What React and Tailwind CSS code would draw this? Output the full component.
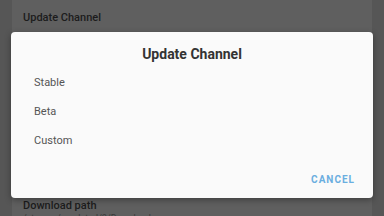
export default function App() {
  return (
    <div className="relative w-[384px] h-[216px] overflow-hidden bg-[#565656]" style={{ fontFamily: "Roboto, 'Liberation Sans', sans-serif" }}>
      <div className="mx-[12px] h-full bg-[#5f5f5f] flex flex-col px-[11px]">
        <div className="pt-[11px] text-[11px] font-medium text-[#1c1c1c] leading-[14px]">Update Channel</div>
        <div className="mt-[174px] text-[11px] font-medium text-[#1c1c1c] leading-[14px]">Download path</div>
        <div className="text-[9px] text-[#3a3a3a] leading-[10px]">/storage/emulated/0/Download</div>
      </div>
      <div className="absolute left-[11px] top-[32px] w-[362px] h-[166px] bg-[#fafafa] rounded-[4px] shadow-[0_2px_6px_rgba(0,0,0,0.35)] flex flex-col">
        <div className="pt-[12px] text-center text-[14px] font-bold text-[#333333] leading-[20px]">Update Channel</div>
        <div className="flex flex-col pl-[23px] mt-[5px] text-[11px] text-[#555555]">
          <div className="h-[29px] flex items-center">Stable</div>
          <div className="h-[29px] flex items-center">Beta</div>
          <div className="h-[29px] flex items-center">Custom</div>
        </div>
        <div className="mt-auto flex justify-end pr-[18px] pb-[11px]">
          <span className="text-[10px] font-bold tracking-[1px] text-[#6aaee0]">CANCEL</span>
        </div>
      </div>
    </div>
  );
}
